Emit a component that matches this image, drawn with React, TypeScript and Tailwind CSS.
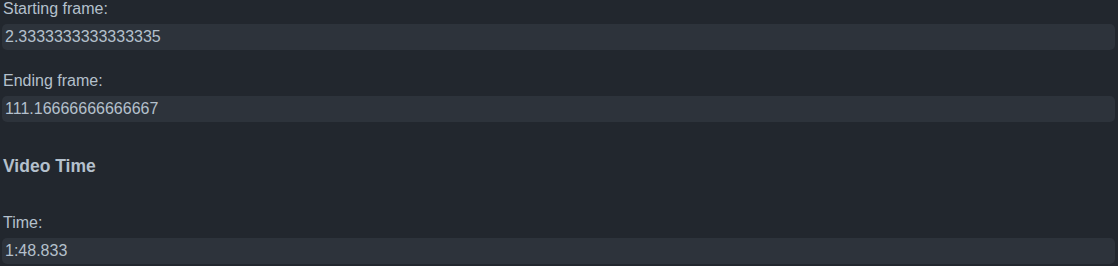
import React from "react";

function Field({ label, value }: { label: string; value: string }) {
  return (
    <div>
      <label className="mb-[6px] block h-[18px] pl-[1px] leading-[18px]">{label}</label>
      <input
        readOnly
        value={value}
        className="block h-[26px] w-full rounded-[5px] bg-[#2d333b] px-[3px] leading-[26px] text-[#b4c0cc] outline-none"
      />
    </div>
  );
}

export default function App() {
  return (
    <div
      className="flex h-[266px] w-[1118px] flex-col overflow-hidden bg-[#22272e] pl-[2px] pr-[3px] text-[16px] text-[#b4c0cc]"
      style={{ fontFamily: '"Liberation Sans", Arial, sans-serif' }}
    >
      <Field label="Starting frame:" value="2.3333333333333335" />
      <div className="h-[22px] shrink-0" />
      <Field label="Ending frame:" value="111.16666666666667" />
      <h3 className="mt-[34px] mb-[38px] h-[20px] pl-[1px] text-[17.5px] font-bold leading-[20px]">
        Video Time
      </h3>
      <Field label="Time:" value="1:48.833" />
    </div>
  );
}
